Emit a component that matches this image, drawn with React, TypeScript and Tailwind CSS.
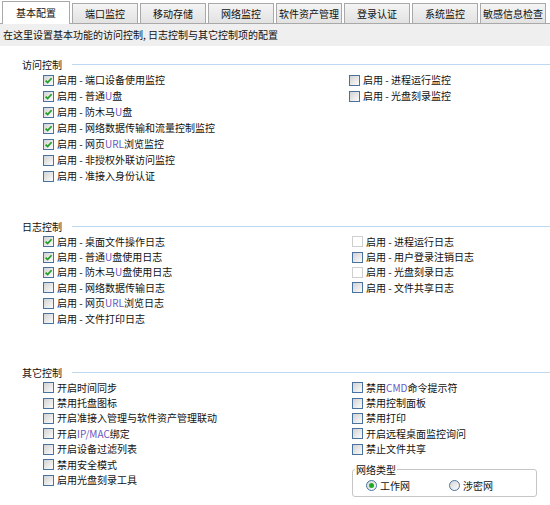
import React from 'react';

type Item = { label: React.ReactNode; checked?: boolean; disabled?: boolean };

const Latin = ({ children }: { children: React.ReactNode }) => (
  <span className="text-[#6a58c0]">{children}</span>
);

function CheckBox({ checked, disabled }: { checked?: boolean; disabled?: boolean }) {
  return (
    <span
      className={
        disabled
          ? 'w-[11px] h-[11px] shrink-0 border border-[#cfcfcf] bg-white flex items-center justify-center'
          : 'w-[11px] h-[11px] shrink-0 border border-[#4873a0] bg-linear-to-br from-[#d2d2d2] to-[#fcfcfc] flex items-center justify-center'
      }
    >
      {checked && (
        <svg width="9" height="9" viewBox="0 0 9 9">
          <path d="M1.6 4.6 L3.6 6.6 L7.6 2.2" fill="none" stroke="#1f9e23" strokeWidth="1.7" />
        </svg>
      )}
    </span>
  );
}

function Row({ item, h }: { item: Item; h: string }) {
  return (
    <div className={`flex items-center gap-[3px] ${h}`}>
      <CheckBox checked={item.checked} disabled={item.disabled} />
      <span className="text-[10px] leading-none text-[#111] whitespace-nowrap">{item.label}</span>
    </div>
  );
}

function SectionLabel({ text }: { text: string }) {
  return (
    <div className="flex items-center h-[15px] pl-[22px]">
      <span className="text-[10px] leading-none text-[#111]">{text}</span>
      <div className="flex-1 h-px ml-[10px] bg-[#bdd8f1]" />
    </div>
  );
}

const access: Item[] = [
  { label: '启用 - 端口设备使用监控', checked: true },
  { label: <>启用 - 普通<Latin>U</Latin>盘</>, checked: true },
  { label: <>启用 - 防木马<Latin>U</Latin>盘</>, checked: true },
  { label: '启用 - 网络数据传输和流量控制监控', checked: true },
  { label: <>启用 - 网页<Latin>URL</Latin>浏览监控</>, checked: true },
  { label: '启用 - 非授权外联访问监控' },
  { label: '启用 - 准接入身份认证' },
];
const accessRight: Item[] = [{ label: '启用 - 进程运行监控' }, { label: '启用 - 光盘刻录监控' }];

const logs: Item[] = [
  { label: '启用 - 桌面文件操作日志', checked: true },
  { label: <>启用 - 普通<Latin>U</Latin>盘使用日志</>, checked: true },
  { label: <>启用 - 防木马<Latin>U</Latin>盘使用日志</>, checked: true },
  { label: '启用 - 网络数据传输日志' },
  { label: <>启用 - 网页<Latin>URL</Latin>浏览日志</> },
  { label: '启用 - 文件打印日志' },
];
const logsRight: Item[] = [
  { label: '启用 - 进程运行日志', disabled: true },
  { label: '启用 - 用户登录注销日志' },
  { label: '启用 - 光盘刻录日志', disabled: true },
  { label: '启用 - 文件共享日志' },
];

const others: Item[] = [
  { label: '开启时间同步' },
  { label: '禁用托盘图标' },
  { label: '开启准接入管理与软件资产管理联动' },
  { label: <>开启<Latin>IP/MAC</Latin>绑定</> },
  { label: '开启设备过滤列表' },
  { label: '禁用安全模式' },
  { label: '启用光盘刻录工具' },
];
const othersRight: Item[] = [
  { label: <>禁用<Latin>CMD</Latin>命令提示符</> },
  { label: '禁用控制面板' },
  { label: '禁用打印' },
  { label: '开启远程桌面监控询问' },
  { label: '禁止文件共享' },
];

const tabs = ['基本配置', '端口监控', '移动存储', '网络监控', '软件资产管理', '登录认证', '系统监控', '敏感信息检查'];

function Radio({ selected, label }: { selected?: boolean; label: string }) {
  return (
    <div className="flex items-center gap-[3px]">
      <span className="w-[11px] h-[11px] rounded-full border border-[#4873a0] bg-linear-to-br from-[#d6d6d6] to-[#fdfdfd] flex items-center justify-center">
        {selected && <span className="w-[5px] h-[5px] rounded-full bg-[#1faa24]" />}
      </span>
      <span className="text-[10px] leading-none text-[#111]">{label}</span>
    </div>
  );
}

function App() {
  return (
    <div
      className="w-[550px] h-[505px] bg-white overflow-hidden"
      style={{ fontFamily: '"Noto Sans CJK SC", "Liberation Sans", sans-serif' }}
    >
      {/* tabs */}
      <div className="flex items-end h-[24px] pl-[2px] gap-[2px] border-b border-[#a9a9a9]">
        {tabs.map((t, i) =>
          i === 0 ? (
            <div
              key={t}
              className="w-[68px] h-[23px] -mb-px bg-white border border-b-0 border-[#a9a9a9] flex items-center justify-center text-[10px] leading-none text-[#111]"
            >
              {t}
            </div>
          ) : (
            <div
              key={t}
              className="w-[66px] h-[20px] bg-linear-to-b from-[#f4f4f4] to-[#e2e2e2] border border-b-0 border-[#a9a9a9] flex items-center justify-center text-[10px] leading-none text-[#111]"
            >
              {t}
            </div>
          )
        )}
      </div>

      {/* description */}
      <div className="h-[22px] bg-[#efefef] flex items-center pl-[3px] text-[10px] leading-none text-[#111]">
        在这里设置基本功能的访问控制, 日志控制与其它控制项的配置
      </div>

      {/* access control */}
      <div className="mt-[11px] h-[162px]">
        <SectionLabel text="访问控制" />
        <div className="flex">
          <div className="w-[349px] pl-[43px]">
            {access.map((it, i) => (
              <Row key={i} item={it} h="h-[16px]" />
            ))}
          </div>
          <div className="flex-1">
            {accessRight.map((it, i) => (
              <Row key={i} item={it} h="h-[16px]" />
            ))}
          </div>
        </div>
      </div>

      {/* log control */}
      <div className="h-[146px]">
        <SectionLabel text="日志控制" />
        <div className="flex">
          <div className="w-[352px] pl-[43px]">
            {logs.map((it, i) => (
              <Row key={i} item={it} h="h-[15.4px]" />
            ))}
          </div>
          <div className="flex-1">
            {logsRight.map((it, i) => (
              <Row key={i} item={it} h="h-[15.4px]" />
            ))}
          </div>
        </div>
      </div>

      {/* other control */}
      <div>
        <SectionLabel text="其它控制" />
        <div className="flex">
          <div className="w-[352px] pl-[43px]">
            {others.map((it, i) => (
              <Row key={i} item={it} h="h-[15.4px]" />
            ))}
          </div>
          <div className="flex-1">
            {othersRight.map((it, i) => (
              <Row key={i} item={it} h="h-[15.4px]" />
            ))}
            <fieldset className="mt-[7px] w-[185px] border border-[#c6c6c6] rounded-[3px] px-[13px]">
              <legend className="ml-[-11px] px-[1px] text-[10px] leading-[12px] text-[#111]">网络类型</legend>
              <div className="h-[20px] flex items-center gap-[39px]">
                <Radio selected label="工作网" />
                <Radio label="涉密网" />
              </div>
            </fieldset>
          </div>
        </div>
      </div>
    </div>
  );
}

export default App;
